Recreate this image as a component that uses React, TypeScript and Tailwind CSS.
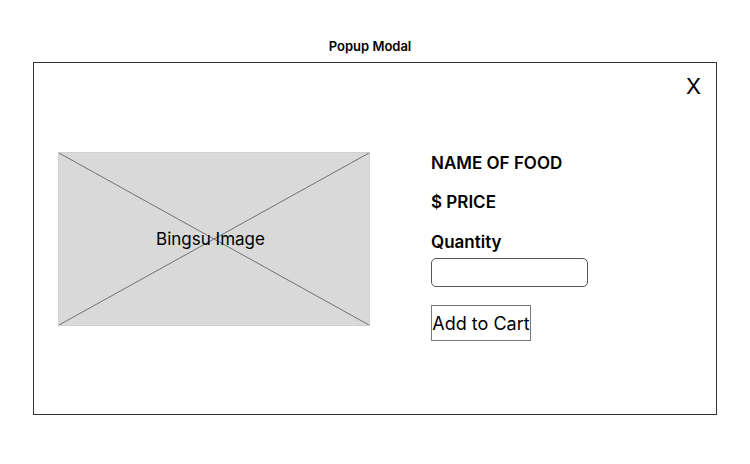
import React from 'react';

const App: React.FC = () => {
  return (
    <div className="w-[750px] h-[464px] bg-white font-['Inter',sans-serif] text-black">
      {/* Title */}
      <div className="pt-[38px] h-[62px] pr-[10px] text-center">
        <h1 className="text-[13px] leading-[16px] font-semibold">Popup Modal</h1>
      </div>

      {/* Modal */}
      <div className="relative ml-[33px] w-[684px] h-[353px] border border-[#333]">
        <button className="absolute top-[9px] right-[15px] text-[22px] leading-[28px] font-normal">X</button>

        <div className="flex items-start pl-[24px] pt-[89px]">
          {/* Image placeholder */}
          <div className="relative w-[312px] h-[174px] bg-[#d9d9d9] border border-dotted border-[#c8c8c8]">
            <svg className="absolute inset-0 w-full h-full" viewBox="0 0 312 174" preserveAspectRatio="none">
              <line x1="0" y1="0" x2="312" y2="174" stroke="#555" strokeWidth="0.8" />
              <line x1="312" y1="0" x2="0" y2="174" stroke="#555" strokeWidth="0.8" />
            </svg>
            <div className="absolute inset-0 flex items-center justify-center pr-[7px]">
              <span className="text-[17px] leading-[22px]">Bingsu Image</span>
            </div>
          </div>

          {/* Details */}
          <div className="ml-[61px] flex flex-col">
            <p className="text-[17px] leading-[22px] font-semibold">NAME OF FOOD</p>
            <p className="mt-[17px] text-[17px] leading-[22px] font-semibold">$ PRICE</p>
            <p className="mt-[18px] text-[17px] leading-[22px] font-semibold">Quantity</p>
            <input
              type="text"
              className="mt-[5px] w-[157px] h-[29px] rounded-[5px] border border-[#555] outline-none"
            />
            <button className="mt-[18px] self-start w-[100px] h-[36px] border border-[#777] text-[18px] leading-[22px] pt-[1px]">
              Add to Cart
            </button>
          </div>
        </div>
      </div>
    </div>
  );
};

export default App;
